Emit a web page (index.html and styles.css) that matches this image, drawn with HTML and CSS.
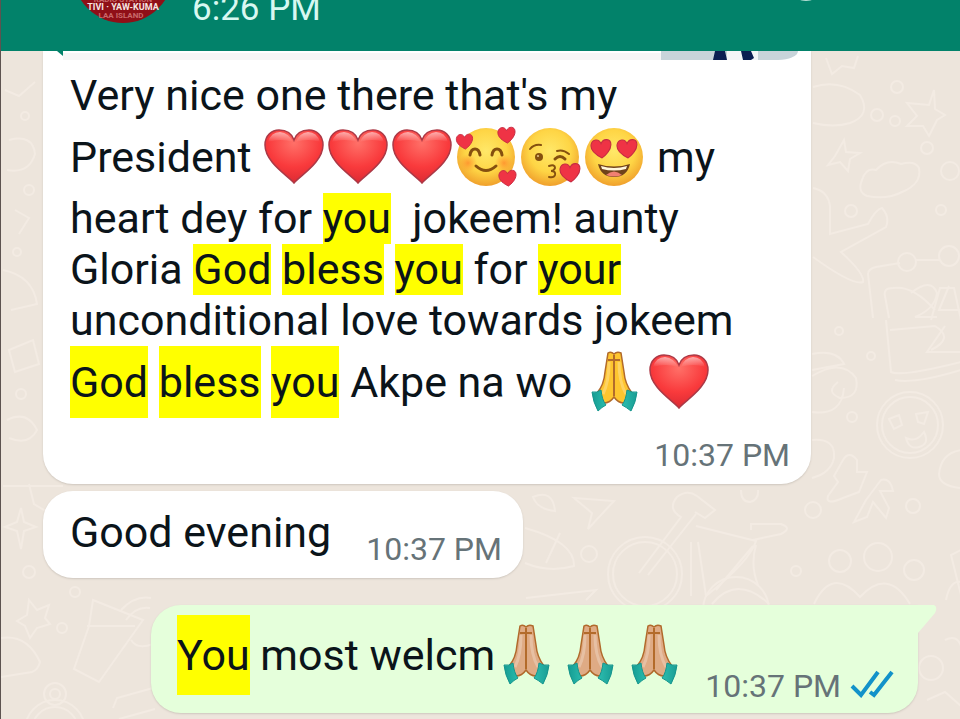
FILE: index.html
```
<!DOCTYPE html>
<html lang="en">
<head>
	<meta charset="utf-8">
	<title>Chat</title>
	<link rel="stylesheet" href="styles.css">
</head>
<body>
	<!-- shared emoji shapes -->
	<svg class="defs" aria-hidden="true">
		<defs>
			<radialGradient id="red" cx=".5" cy=".25" r=".75">
				<stop offset="0" stop-color="#ff7068"/>
				<stop offset=".6" stop-color="#f93a3c"/>
				<stop offset="1" stop-color="#dc2a33"/>
			</radialGradient>
			<linearGradient id="shine" x1="0" y1="0" x2="0" y2="1">
				<stop offset="0" stop-color="#fff" stop-opacity=".55"/>
				<stop offset="1" stop-color="#fff" stop-opacity="0"/>
			</linearGradient>
			<radialGradient id="yellow" cx=".5" cy=".4" r=".6">
				<stop offset="0" stop-color="#ffe869"/>
				<stop offset=".6" stop-color="#fed545"/>
				<stop offset="1" stop-color="#f0a02c"/>
			</radialGradient>
			<radialGradient id="blush">
				<stop offset="0" stop-color="#ff8a2c" stop-opacity=".8"/>
				<stop offset="1" stop-color="#ff9a30" stop-opacity="0"/>
			</radialGradient>
			<linearGradient id="cuff" x1="0" y1="0" x2="1" y2="0">
				<stop offset="0" stop-color="#159c92"/>
				<stop offset=".5" stop-color="#35cdbd"/>
				<stop offset="1" stop-color="#1a9d94"/>
			</linearGradient>
			<symbol id="heart" viewBox="0 0 64 64">
				<path d="M32 58 C25 50 3 37 3 20 C3 10 10 5 17 5 C25 5 30 9 32 15 C34 9 39 5 47 5 C54 5 61 10 61 20 C61 37 39 50 32 58Z" fill="url(#red)" stroke="#ac3946" stroke-width="1.5"/>
				<path d="M6 17 Q9 7 18 7 Q27 8 31 17 Q18 13 6 17Z M34 17 Q37 8 46 7 Q55 7 58 17 Q46 13 34 17Z" fill="url(#shine)"/>
			</symbol>
			<symbol id="small-heart" viewBox="0 0 20 20">
				<path d="M11 19 C7 17 0 13 1 7 C2 2 8 1 10 6 C12 1 19 1 19 7 C19 12 14 17 11 19Z" fill="#ef3345" stroke="#c52b42"/>
			</symbol>
			<symbol id="adore" viewBox="0 0 64 64">
				<circle cx="32" cy="32" r="29" fill="url(#yellow)"/>
				<circle cx="14" cy="38" r="9" fill="url(#blush)"/>
				<circle cx="50" cy="38" r="9" fill="url(#blush)"/>
				<path d="M16 30 Q17 24 21 24 Q25 24 26 30 M38 30 Q39 24 43 24 Q47 24 48 30" class="ink"/>
				<path d="M22 41 Q32 50 42 41" class="ink"/>
				<use href="#small-heart" x="1" y="7" width="19" height="18"/>
				<use href="#small-heart" x="43" y="0" width="19" height="19"/>
				<use href="#small-heart" x="44" y="43" width="19" height="19"/>
			</symbol>
			<symbol id="kiss" viewBox="0 0 64 64">
				<circle cx="32" cy="32" r="29" fill="url(#yellow)"/>
				<path d="M12 24 Q16 19 23 20 M39 26 Q45 24 51 29" class="ink thin"/>
				<circle cx="21" cy="32" r="4" fill="#85500f"/>
				<circle cx="20" cy="31" r="1" fill="#e8c98e"/>
				<path d="M37 34 Q42 29 47 34" class="ink"/>
				<path d="M31 41 Q37 39 37 43 Q36 46 33 46 Q38 46 37 50 Q36 53 31 52" class="ink thin"/>
				<use href="#small-heart" x="41" y="36" width="22" height="22"/>
			</symbol>
			<symbol id="love" viewBox="0 0 64 64">
				<circle cx="32" cy="32" r="29" fill="url(#yellow)"/>
				<use href="#small-heart" x="8" y="12" width="22" height="22"/>
				<use href="#small-heart" x="34" y="12" width="22" height="22"/>
				<path d="M16 39 Q32 44 48 39 Q45 52 32 52 Q19 52 16 39Z" fill="#70421a"/>
				<path d="M19 41 Q32 45 45 41 L44 44 Q32 47 20 44Z" fill="#fff6dc"/>
				<path d="M24 50 Q32 43 40 50 Q32 53 24 50Z" fill="#f08072"/>
			</symbol>
			<symbol id="pray" viewBox="0 0 64 64">
				<path d="M25 3 Q28 1 31 4 Q34 1 38 3 L41 22 Q42 34 49 43 L41 53 Q35 53 31 47 Q27 53 21 53 L14 43 Q21 35 22 22Z" fill="currentColor" stroke="#b16a2c" stroke-width="1.5"/>
				<path d="M31 5 V46 M25 10 H37" stroke="#b36b2b" stroke-width="2" fill="none"/>
				<path d="M26 12 Q26 32 20 44 M36 12 Q36 32 43 44" stroke="#fff" stroke-opacity=".25" stroke-width="3" fill="none"/>
				<path d="M9 42 Q14 43 18 40 Q19 50 23 55 Q19 57 15 61 Q10 52 9 42Z M54 42 Q49 43 44 40 Q43 50 39 55 Q43 57 48 61 Q53 52 54 42Z" fill="url(#cuff)" stroke="#15958d"/>
			</symbol>
		</defs>
	</svg>

	<!-- wallpaper doodles -->
	<svg class="wallpaper" viewBox="0 0 960 719" preserveAspectRatio="xMinYMin slice" aria-hidden="true">
		<path d="M825 58 l6 16 10-8 12 2 4-12 M812 87 q25-8 47 8 12 20-10 28 -16 5-37 0 M843 140 l2 12 14 1 -10 6 -2 12 -8-9 -12 3 7-9z M861 180 q-5 12 5 16 20 4 35-4 20-8 17-24 -4-8-18-4 -14-6-25 6 -10-3-14 10z M933 90 l-5 15 -22-2 10 13 -10 10 16 0 6 10 8-16 8-5 -10-6z"/>
		<path d="M812 188 q15 3 17 18 v28 l38-10 q8-15 14-16 8 9 4 19 l-45 25 q24 22 22 30 -10 4-50-25"/>
		<path d="M872 318 l-5-44 q0-5 8-7 l24-4 M915 260 h24 M888 318 l-4-22 q-2-8 8-8 20-3 42 22 M930 320 l9-32 14 0 7 32 M889 330 l45-4 q20 12-4 24 M944 326 l-18 26 h34 M885 320 l5 52 q10 5 70-10 M894 380 q20 4 66-10"/>
		<path d="M910 293 q20-16 26 0 -2 16-22 24 h22 M948 286 l-10 24 h22"/>
		<circle cx="909" cy="425" r="33"/><circle cx="909" cy="425" r="28"/>
		<path d="M888 419 l10-4 3 10 -8 4z M915 414 l12-2 -4 12 -6-2z M905 438 q10 5 18-6 6 12-5 15 -10 3-13-9z"/>
		<path d="M811 354 q25-5 32 10 l-32 6 M811 376 q30-18 44 2 q4 20-16 20 -15-6-2-16 M811 412 q30 4 32-24 M811 440 q24-2 22 18 -3 15-22 20"/>
		<path d="M842 460 q6-10 14 0 v12 h10 l-8 20 -16 6 q-18 8-15-2 l10-14 -4-6z M865 500 l-12 22 13 -5 6-15 13 16 3-10 -9-17 h13 q-3-14-12-11z"/>
		<circle cx="644" cy="574" r="37"/><circle cx="644" cy="574" r="32"/>
		<path d="M647 575 l48-61 M638 573 l42-56 q-14-8-4-20 q10-8 20-1 l18 14 -10 8 -10-6 M695 526 l60 15 q-6 20-50 55 l-8-54 M690 542 v54 M752 546 l-37 44 M750 530 v-6 h30 q12 4 0 10 l-28 6 M755 545 q-6 20 2 40 M711 604 q25-30 57 0"/>
		<circle cx="735" cy="610" r="33"/>
		<path d="M573 498 l40 3 -26 28 4-16z M532 497 q20-8 22 14 -18-2-22-14z M524 528 q50 14 49 38 -25 7-49-3 M545 563 l14-30 M525 598 l70-8 -10 10 M740 490 q0 12 9 12 9-2 8-12"/>
		<circle cx="839" cy="561" r="11"/><circle cx="877" cy="557" r="14"/><circle cx="913" cy="570" r="10"/><circle cx="812" cy="510" r="8"/><circle cx="912" cy="506" r="7"/><circle cx="588" cy="554" r="8"/><circle cx="795" cy="571" r="5"/>
		<path d="M813 604 q18-38 46-7 q28-30 50 7 M960 550 l-10 5 10 40 M960 450 q-20 3-22 24 0 12 22 14"/>
		<circle cx="896" cy="87" r="6"/><circle cx="876" cy="115" r="6"/><circle cx="894" cy="121" r="5"/><circle cx="926" cy="148" r="6"/><circle cx="949" cy="171" r="9"/><circle cx="850" cy="211" r="6"/><circle cx="940" cy="210" r="5"/><circle cx="906" cy="262" r="9"/><circle cx="948" cy="256" r="10"/><circle cx="870" cy="356" r="4"/><circle cx="851" cy="417" r="5"/><circle cx="838" cy="331" r="4"/>
		<!-- left edge and bottom -->
		<path d="M20 508 l3 14 12 5 -12 4 -3 18 -4-18 -12-4 12-5z M2 486 h60 M28 484 l5 20 20 12 M28 600 l8 10 12-5 -4 13 5 6 -13 4 -7 10 -5-12 -8-5 10-6z M0 638 q26-4 39 24 -2 8-8 10 l-31 5"/>
		<path d="M92 600 l50 20 -44 62 -25-13 15-43z M86 626 h48 M120 610 q14-15 30-12 M125 620 q10-14 24-12 M130 640 q6 10 22 4 M112 708 l4-10 36-10 M118 719 l36-10"/>
		<circle cx="54" cy="694" r="11"/><circle cx="54" cy="694" r="5"/><circle cx="54" cy="730" r="30"/><circle cx="54" cy="730" r="23"/><circle cx="28" cy="572" r="6"/><circle cx="61" cy="628" r="5"/><circle cx="74" cy="592" r="5"/>
		<path d="M4 90 l14 6 16-14 M8 140 q24-6 26 14 -6 20-28 16 M14 210 l14 8 -10 16 M2 270 q30 6 34 34 l-26 6 M8 350 l24-10 6 24 -24 8z M6 420 q20-10 30 10 -8 16-28 8"/>
		<circle cx="24" cy="116" r="4"/><circle cx="28" cy="190" r="5"/><circle cx="16" cy="252" r="4"/><circle cx="20" cy="394" r="5"/>
		<circle cx="930" cy="668" r="12"/><path d="M944 640 q12-6 16 6 M926 700 l18-8 16 14 M945 600 q4-20 15-18"/>
	</svg>

	<header class="topbar">
		<svg class="avatar" viewBox="0 0 100 100" role="img" aria-label="Contact picture">
			<circle cx="50" cy="50" r="50"/>
			<text x="50" y="79" class="faint">RADIO STATION</text>
			<text x="50" y="87">TIVI · YAW-KUMA</text>
			<text x="48" y="95" class="faint">LAA ISLAND</text>
		</svg>
		<span class="seen">6:26 PM</span>
		<i class="dot"></i>
	</header>

	<main class="chat">
		<article class="bubble in long">
			<div class="quote">
				<svg class="corner" viewBox="0 0 6 5"><path d="M0 0H6V5Z"/></svg>
				<div class="quote-text"></div>
				<svg class="thumb" viewBox="0 0 137 9" preserveAspectRatio="none">
					<path d="M0 0H137V9H0Z" fill="#c8d4da"/>
					<path d="M66 0H97V9H66Z" fill="#f4f6f7"/>
					<path d="M54 0H64L66 9H52Z M80 0H90L93 7L90 9H82Z" fill="#0b1f52"/>
				</svg>
			</div>
			<p class="text">
				<span class="line">Very nice one there that's my</span>
				<span class="line tall">President <svg class="emoji"><use href="#heart"/></svg><svg class="emoji"><use href="#heart"/></svg><svg class="emoji"><use href="#heart"/></svg><svg class="emoji"><use href="#adore"/></svg><svg class="emoji"><use href="#kiss"/></svg><svg class="emoji"><use href="#love"/></svg> my</span>
				<span class="line">heart dey for <mark>you</mark>&nbsp; jokeem! aunty</span>
				<span class="line">Gloria <mark>God</mark> <mark>bless</mark> <mark>you</mark> for <mark>your</mark></span>
				<span class="line">unconditional love towards jokeem</span>
				<span class="line tall"><mark>God</mark> <mark>bless</mark> <mark>you</mark> Akpe na wo <svg class="emoji"><use href="#pray"/></svg><svg class="emoji"><use href="#heart"/></svg></span>
			</p>
			<time>10:37 PM</time>
		</article>

		<article class="bubble in short">
			<p class="text"><span class="line">Good evening</span></p>
			<time>10:37 PM</time>
		</article>

		<article class="bubble out short">
			<p class="text"><span class="line tall"><mark>You</mark> most welcm<svg class="emoji tan"><use href="#pray"/></svg><svg class="emoji tan"><use href="#pray"/></svg><svg class="emoji tan"><use href="#pray"/></svg></span></p>
			<time>10:37 PM</time>
			<svg class="ticks" viewBox="0 0 44 28" aria-label="Read"><path d="M2 16 L11 25 L28 2 M20 22 L24 25 L42 2"/></svg>
			<svg class="tail" viewBox="0 0 20 30"><path d="M0 0H16Q20 2 17 8L0 28Z"/></svg>
		</article>
	</main>
</body>
</html>
```
FILE: styles.css
```
*{
	box-sizing: border-box;
}

body{
	position: relative;
	margin: 0;
	min-height: 100vh;
	overflow: hidden;
	background-color: #ede5dc;
	border-left: 1px solid #5d5350;
	color: #0b141a;
	font-family: Roboto, sans-serif;
}

.defs{
	position: absolute;
	width: 0;
	height: 0;
}

.wallpaper{
	position: absolute;
	top: 0;
	left: 0;
	width: 100%;
	height: 100%;
	fill: none;
	stroke: #f3ebe3;
	stroke-width: 2;
}

/* header */
.topbar{
	position: relative;
	z-index: 1;
	display: flex;
	align-items: flex-end;
	height: 51px;
	padding: 0 148px 0 72px;
	overflow: hidden;
	background-color: #02826a;
}

.avatar{
	flex: none;
	width: 100px;
	height: 100px;
	margin-bottom: 28px;
	fill: #8f0f17;
}

.avatar text{
	fill: #f6e4e2;
	font-size: 9px;
	font-weight: 700;
	text-anchor: middle;
}

.avatar .faint{
	fill: #c8686a;
	font-size: 8px;
}

.seen{
	margin: 0 auto 20px 19px;
	color: #d8f8f1;
	font-size: 35px;
	line-height: 44px;
}

.dot{
	width: 12px;
	height: 3px;
	margin-bottom: 50px;
	border-radius: 50%;
	background-color: #b6ded5;
}

/* messages */
.chat{
	position: relative;
	display: flex;
	flex-direction: column;
	align-items: flex-start;
	padding: 0 42px 6px;
}

.bubble{
	position: relative;
	border-radius: 30px;
	background-color: #fff;
	box-shadow: 0 1px 2px #cfc7be;
}

.bubble.long{
	width: calc(100% - 107px);
	padding: 0 21px 10px 27px;
	border-radius: 0 0 30px 30px;
}

.bubble.short{
	display: flex;
	align-items: flex-end;
	margin-top: 7px;
	padding: 16px 21px 10px 27px;
}

.bubble.out{
	align-self: flex-end;
	margin-top: 27px;
	padding: 10px 24px 8px 26px;
	border-top-right-radius: 0;
	background-color: #e5ffdb;
}

.quote{
	display: flex;
	height: 9px;
	margin: 0 -8px 10px -13px;
}

.corner{
	width: 6px;
	height: 5px;
	fill: #02826a;
}

.quote-text{
	flex: 1;
	margin-top: 2px;
	background-color: #f6f6f6;
}

.thumb{
	width: 137px;
	height: 9px;
	border-bottom-right-radius: 20px 9px;
}

.text{
	margin: 0;
	font-size: 43px;
	white-space: nowrap;
}

.line{
	display: block;
	line-height: 51px;
}

.line.tall{
	line-height: 72px;
}

.out .line.tall{
	line-height: 80px;
}

.short .text{
	padding-bottom: 10px;
}

mark{
	display: inline-block;
	background-color: #ff0;
	color: inherit;
}

.emoji{
	width: 64px;
	height: 64px;
	margin: -12px 0 -4px;
	vertical-align: middle;
	color: #fec52f;
}

.emoji.tan{
	color: #dfab85;
}

.ink{
	fill: none;
	stroke: #85500f;
	stroke-width: 3;
	stroke-linecap: round;
}

.thin{
	stroke-width: 2;
}

time{
	display: block;
	color: #667378;
	font-size: 32px;
	line-height: 38px;
	text-align: right;
}

.long time{
	margin-top: 18px;
}

.short time{
	margin-left: 35px;
}

.out time{
	margin-left: 18px;
}

.ticks{
	width: 44px;
	height: 28px;
	margin: 0 0 7px 9px;
	fill: none;
	stroke: #1292c9;
	stroke-width: 4;
}

.tail{
	position: absolute;
	top: 0;
	left: 100%;
	width: 20px;
	height: 30px;
	fill: #e5ffdb;
}
```
